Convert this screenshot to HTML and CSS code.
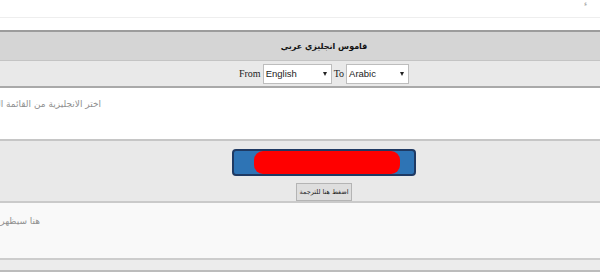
FILE: index.html
```html
<!DOCTYPE html>
<html lang="ar">
<head>
<meta charset="utf-8">
<title>قاموس انجليزي عربي</title>
<link rel="stylesheet" href="styles.css">
</head>
<body>
<div class="page">
  <div class="topbar"><span class="corner">ﺀ</span></div>
  <div class="gap"></div>
  <div class="header"><span class="title" dir="rtl">قاموس انجليزي عربي</span></div>
  <div class="langrow">
    <span class="lbl">From</span>
    <div class="sel sel-from"><span>English</span><span class="arrow"></span></div>
    <span class="lbl">To</span>
    <div class="sel sel-to"><span>Arabic</span><span class="arrow"></span></div>
  </div>
  <div class="input">
    <span class="clip clip-in" dir="rtl">اختر الانجليزية من القائمة اليسرى واكتب الكلمة هنا</span>
  </div>
  <div class="action">
    <div class="banner"><div class="pill"></div></div>
    <div class="btn" dir="rtl">اضغط هنا للترجمة</div>
  </div>
  <div class="output">
    <span class="clip clip-out" dir="rtl">هنا سيظهر الترجمة</span>
  </div>
  <div class="foot"></div>
</div>
</body>
</html>
```
FILE: styles.css
```css
html, body {
  margin: 0;
  padding: 0;
  background: #ffffff;
  overflow: hidden;
}
.page {
  width: 648px;
  font-family: "DejaVu Sans", "Liberation Sans", sans-serif;
}
.topbar {
  height: 17px;
  border-bottom: 1px solid #eeeeee;
  display: flex;
  justify-content: flex-start;
  padding-left: 584px;
}
.corner {
  font-size: 7px;
  color: #999;
  line-height: 8px;
}
.gap {
  height: 12px;
}
.header {
  border-top: 2px solid #9c9c9c;
  background: #d5d5d5;
  height: 28px;
  border-bottom: 1px solid #c4c4c4;
  display: flex;
  align-items: center;
  justify-content: center;
}
.title {
  font-weight: bold;
  font-size: 8px;
  color: #111;
}
.langrow {
  background: #e9e9e9;
  height: 25px;
  border-bottom: 2px solid #a9a9a9;
  display: flex;
  align-items: center;
  justify-content: center;
  gap: 2px;
}
.lbl {
  font-family: "Liberation Serif", serif;
  font-size: 10px;
  color: #222;
}
.sel {
  height: 18px;
  border: 1px solid #bdbdbd;
  background: #fff;
  display: flex;
  align-items: center;
  justify-content: space-between;
  padding: 0 4px 0 2px;
  box-sizing: content-box;
  font-family: "Liberation Sans", sans-serif;
  font-size: 9.5px;
  color: #222;
}
.sel-from { width: 61px; }
.sel-to { width: 55px; }
.arrow {
  width: 0;
  height: 0;
  border-left: 2.5px solid transparent;
  border-right: 2.5px solid transparent;
  border-top: 4px solid #222;
}
.input {
  background: #ffffff;
  height: 53px;
  border-bottom: 2px solid #c6c6c6;
  padding-top: 8px;
  box-sizing: border-box;
}
.clip {
  display: inline-block;
  white-space: nowrap;
  overflow: hidden;
  font-size: 9px;
  color: #909090;
  line-height: 14px;
}
.clip-in { width: 101px; }
.clip-out { width: 40px; }
.action {
  background: #e9e9e9;
  height: 62px;
  border-bottom: 2px solid #cacaca;
  box-sizing: border-box;
  display: flex;
  flex-direction: column;
  align-items: center;
  padding-top: 8px;
  gap: 7px;
}
.banner {
  width: 146px;
  height: 23px;
  border: 2px solid #1f3a63;
  border-radius: 4px;
  background: #2e74b5;
  display: flex;
  align-items: center;
  padding: 0 14px 0 20px;
  box-sizing: content-box;
}
.pill {
  flex: 1;
  height: 23px;
  background: #ff0000;
  border-radius: 9px;
}
.btn {
  width: 54px;
  height: 18px;
  border: 1px solid #b4b4b4;
  background: #dedede;
  font-size: 6.5px;
  color: #222;
  display: flex;
  align-items: center;
  justify-content: center;
  white-space: nowrap;
}
.output {
  background: #f9f9f9;
  height: 57px;
  border-bottom: 2px solid #cdcdcd;
  padding-top: 10px;
  box-sizing: border-box;
}
.foot {
  background: #ececec;
  height: 10px;
  border-bottom: 2px solid #bcbcbc;
}
```
